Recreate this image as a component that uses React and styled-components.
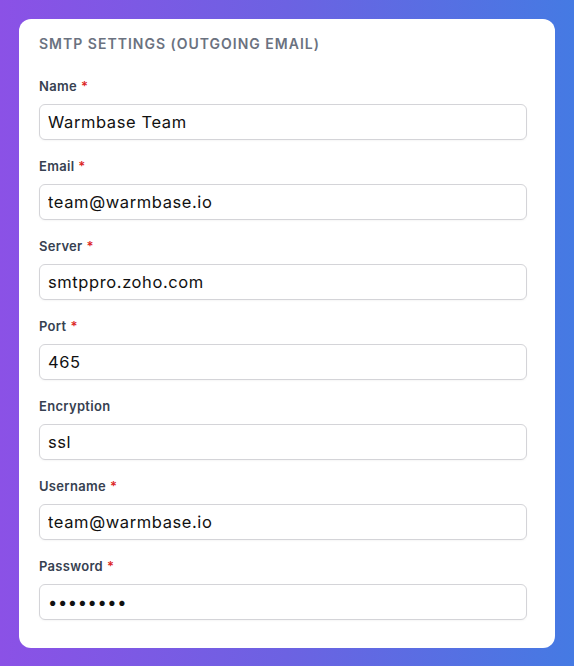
import React from "react";
import styled, { createGlobalStyle } from "styled-components";

const GlobalStyle = createGlobalStyle`
  html, body {
    margin: 0;
    padding: 0;
  }
  body {
    font-family: Inter, "Noto Sans", sans-serif;
    background: linear-gradient(90deg, #8b51e6 0%, #6c62e2 50%, #457ae3 100%);
    min-height: 666px;
  }
`;

const Page = styled.div`
  padding: 19px;
`;

const Card = styled.div`
  background: #ffffff;
  border-radius: 12px;
  padding: 15px 28px 28px 20px;
`;

const Title = styled.h2`
  margin: 0 0 22px;
  font-size: 14px;
  line-height: 20px;
  font-weight: 600;
  letter-spacing: 1px;
  text-transform: uppercase;
  color: #6b7280;
`;

const Fields = styled.div`
  display: flex;
  flex-direction: column;
  gap: 16px;
`;

const Field = styled.div`
  display: flex;
  flex-direction: column;
  gap: 8px;
`;

const Label = styled.label`
  font-size: 13px;
  line-height: 20px;
  font-weight: 600;
  letter-spacing: 0.3px;
  color: #374151;
`;

const Required = styled.span`
  color: #dc2626;
  margin-left: 4px;
`;

const Input = styled.input`
  box-sizing: border-box;
  width: 100%;
  height: 36px;
  padding: 0 8px;
  border: 1px solid #d4d4d8;
  border-radius: 6px;
  background: #fff;
  box-shadow: 0 1px 2px rgba(0, 0, 0, 0.04);
  font-family: Inter, "Noto Sans", sans-serif;
  font-size: 16.5px;
  letter-spacing: 0.6px;
  color: #111111;
  outline: none;
`;

const fields = [
  { label: "Name", value: "Warmbase Team", required: true },
  { label: "Email", value: "team@warmbase.io", required: true },
  { label: "Server", value: "smtppro.zoho.com", required: true },
  { label: "Port", value: "465", required: true },
  { label: "Encryption", value: "ssl" },
  { label: "Username", value: "team@warmbase.io", required: true },
  { label: "Password", value: "warmbase", required: true, type: "password" },
];

export default function App() {
  return (
    <>
      <GlobalStyle />
      <Page>
        <Card>
          <Title>SMTP Settings (Outgoing Email)</Title>
          <Fields>
            {fields.map((f) => (
              <Field key={f.label}>
                <Label>
                  {f.label}
                  {f.required && <Required>*</Required>}
                </Label>
                <Input type={f.type || "text"} defaultValue={f.value} readOnly />
              </Field>
            ))}
          </Fields>
        </Card>
      </Page>
    </>
  );
}
